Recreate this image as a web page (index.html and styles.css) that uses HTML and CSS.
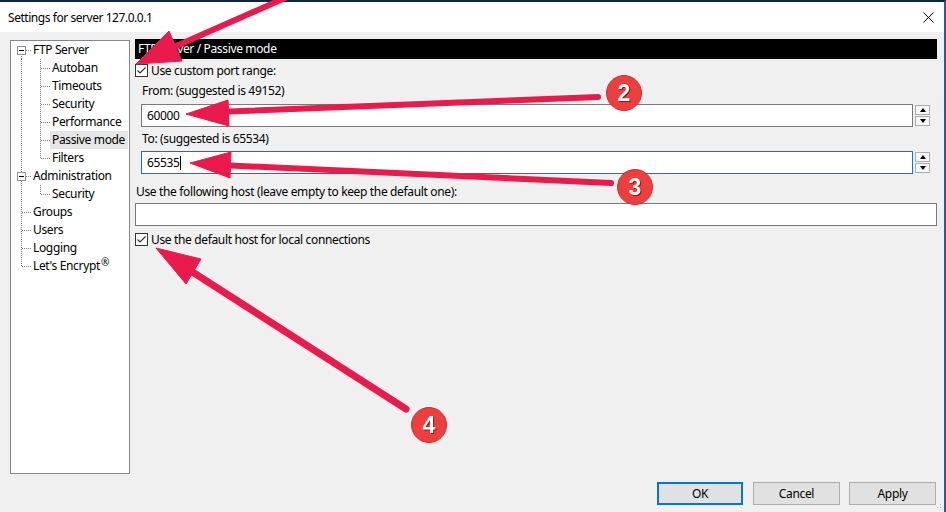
FILE: index.html
```html
<!DOCTYPE html>
<html>
<head>
<meta charset="utf-8">
<link rel="stylesheet" href="styles.css">
</head>
<body>
<div class="window">
  <div class="titlebar">
    <span class="title">Settings for server 127.0.0.1</span>
    <svg class="close" width="11" height="11" viewBox="0 0 11 11"><path d="M0.5 0.5 L10.5 10.5 M10.5 0.5 L0.5 10.5" stroke="#000" stroke-width="1"/></svg>
  </div>
  <div class="body">
    <div class="content">
      <div class="tree">
        <div class="row root first"><span class="vr-bottom"></span><span class="exp"></span><span class="hr-root"></span><span class="txt">FTP Server</span></div>
        <div class="row child"><span class="vr-full"></span><span class="vc-full"></span><span class="hr-child"></span><span class="txt">Autoban</span></div>
        <div class="row child"><span class="vr-full"></span><span class="vc-full"></span><span class="hr-child"></span><span class="txt">Timeouts</span></div>
        <div class="row child"><span class="vr-full"></span><span class="vc-full"></span><span class="hr-child"></span><span class="txt">Security</span></div>
        <div class="row child"><span class="vr-full"></span><span class="vc-full"></span><span class="hr-child"></span><span class="txt">Performance</span></div>
        <div class="row child"><span class="vr-full"></span><span class="vc-full"></span><span class="hr-child"></span><span class="txt selected">Passive mode</span></div>
        <div class="row child"><span class="vr-full"></span><span class="vc-top"></span><span class="hr-child"></span><span class="txt">Filters</span></div>
        <div class="row root"><span class="vr-full"></span><span class="exp"></span><span class="hr-root"></span><span class="txt">Administration</span></div>
        <div class="row child"><span class="vr-full"></span><span class="vc-top"></span><span class="hr-child"></span><span class="txt">Security</span></div>
        <div class="row root"><span class="vr-full"></span><span class="hr-root"></span><span class="txt">Groups</span></div>
        <div class="row root"><span class="vr-full"></span><span class="hr-root"></span><span class="txt">Users</span></div>
        <div class="row root"><span class="vr-full"></span><span class="hr-root"></span><span class="txt">Logging</span></div>
        <div class="row root"><span class="vr-top"></span><span class="hr-root"></span><span class="txt">Let's Encrypt<sup>®</sup></span></div>
      </div>
      <div class="panel">
        <div class="header">FTP Server / Passive mode</div>
        <label class="check-row first-check">
          <span class="checkbox"><svg width="11" height="11" viewBox="0 0 11 11"><path d="M1.5 5.5 L4 8 L9.5 2.5" fill="none" stroke="#333" stroke-width="1.2"/></svg></span>
          <span>Use custom port range:</span>
        </label>
        <div class="label indent lbl-from">From: (suggested is 49152)</div>
        <div class="spin-row sr-from">
          <div class="input">60000</div>
          <div class="spinner">
            <div class="spin-btn"><span class="tri-up"></span></div>
            <div class="spin-btn"><span class="tri-down"></span></div>
          </div>
        </div>
        <div class="label indent lbl-to">To: (suggested is 65534)</div>
        <div class="spin-row sr-to">
          <div class="input focused">65535<span class="caret"></span></div>
          <div class="spinner">
            <div class="spin-btn"><span class="tri-up"></span></div>
            <div class="spin-btn"><span class="tri-down"></span></div>
          </div>
        </div>
        <div class="label lbl-host">Use the following host (leave empty to keep the default one):</div>
        <div class="input wide"></div>
        <label class="check-row second-check">
          <span class="checkbox"><svg width="11" height="11" viewBox="0 0 11 11"><path d="M1.5 5.5 L4 8 L9.5 2.5" fill="none" stroke="#333" stroke-width="1.2"/></svg></span>
          <span>Use the default host for local connections</span>
        </label>
      </div>
    </div>
    <div class="footer">
      <div class="btn ok">OK</div>
      <div class="btn cancel">Cancel</div>
      <div class="btn apply">Apply</div>
    </div>
  </div>
  <div class="grip"></div>
  <svg class="annotations" width="946" height="512" viewBox="0 0 946 512">
    <g fill="#ea1a4c" stroke="#ea1a4c">
      <line x1="294" y1="-6" x2="165" y2="51" stroke-width="6" stroke-linecap="round"/>
      <polygon points="136,64 182,61 169,31" stroke-width="1" stroke-linejoin="round"/>
      <line x1="598" y1="97" x2="215" y2="112" stroke-width="6" stroke-linecap="round"/>
      <polygon points="186,114 229,126 228,100" stroke-width="1" stroke-linejoin="round"/>
      <line x1="611" y1="183" x2="220" y2="165" stroke-width="6" stroke-linecap="round"/>
      <polygon points="190,163 231,152 230,178" stroke-width="1" stroke-linejoin="round"/>
      <line x1="406" y1="409" x2="180" y2="264" stroke-width="7" stroke-linecap="round"/>
      <polygon points="156,248 201,259 186,284" stroke-width="1" stroke-linejoin="round"/>
    </g>
    <g class="badge">
      <circle cx="624" cy="93" r="17.5" fill="#ef3e3e" stroke="#c9302f" stroke-width="1"/>
      <text x="624" y="101" text-anchor="middle">2</text>
    </g>
    <g class="badge">
      <circle cx="635" cy="187" r="17.5" fill="#ef3e3e" stroke="#c9302f" stroke-width="1"/>
      <text x="635" y="195" text-anchor="middle">3</text>
    </g>
    <g class="badge">
      <circle cx="429" cy="425" r="17.5" fill="#ef3e3e" stroke="#c9302f" stroke-width="1"/>
      <text x="429" y="433" text-anchor="middle">4</text>
    </g>
  </svg>
</div>
</body>
</html>
```

FILE: styles.css
```css
* { box-sizing: border-box; }
html, body { margin: 0; padding: 0; }
body {
  width: 946px;
  height: 512px;
  overflow: hidden;
  font-family: "Noto Sans", "Open Sans", sans-serif;
  font-size: 12px;
  letter-spacing: -0.35px;
  color: #000;
  background: #f0f0f0;
}
.window {
  position: relative;
  width: 946px;
  height: 512px;
  border-top: 2px solid #0e2444;
  border-right: 2px solid #1b5eab;
  display: flex;
  flex-direction: column;
}
.titlebar {
  height: 30px;
  background: #fff;
  display: flex;
  align-items: center;
  justify-content: space-between;
  padding: 0 10px 0 8px;
}
.title { font-size: 12px; letter-spacing: -0.45px; }
.close { display: block; }
.body {
  flex: 1;
  background: #f0f0f0;
  display: flex;
  flex-direction: column;
  padding: 8px 7px 0 10px;
}
.content {
  display: flex;
  gap: 5px;
}
.tree {
  width: 120px;
  height: 434px;
  border: 1px solid #828790;
  background: #fff;
}
.row {
  position: relative;
  height: 18px;
  display: flex;
  align-items: center;
}
.row.root { padding-left: 20px; }
.row.child { padding-left: 39px; }
.txt {
  padding: 0 2px;
  line-height: 18px;
  white-space: nowrap;
}
.txt sup { font-size: 10px; vertical-align: 4px; line-height: 0; margin-left: 1px; }
.txt.selected { background: #e5e5e5; padding-right: 3px; }
.vr-full, .vr-top, .vr-bottom, .vc-full, .vc-top {
  position: absolute;
  width: 1px;
  background-image: linear-gradient(to bottom, #808080 50%, transparent 50%);
  background-size: 1px 2px;
}
.vr-full { left: 10px; top: 0; bottom: 0; }
.vr-top { left: 10px; top: 0; height: 9px; }
.vr-bottom { left: 10px; top: 9px; bottom: 0; }
.vc-full { left: 29px; top: 0; bottom: 0; }
.vc-top { left: 29px; top: 0; height: 9px; }
.hr-root, .hr-child {
  position: absolute;
  top: 9px;
  height: 1px;
  background-image: linear-gradient(to right, #808080 50%, transparent 50%);
  background-size: 2px 1px;
}
.hr-root { left: 11px; width: 9px; }
.hr-child { left: 30px; width: 9px; }
.exp {
  position: absolute;
  left: 6px;
  top: 5px;
  width: 9px;
  height: 9px;
  border: 1px solid #919191;
  background: #fff;
  z-index: 1;
}
.exp::after {
  content: "";
  position: absolute;
  left: 1px;
  top: 3px;
  width: 5px;
  height: 1px;
  background: #000;
}

.panel {
  flex: 1;
  margin-top: -1px;
  display: flex;
  flex-direction: column;
}
.header {
  height: 20px;
  line-height: 20px;
  background: #000;
  color: #fff;
  padding-left: 3px;
}
.check-row {
  display: flex;
  align-items: center;
  gap: 3px;
  height: 13px;
}
.first-check { margin-top: 5px; }
.second-check { margin-top: 7px; }
.checkbox {
  width: 13px;
  height: 13px;
  border: 1px solid #333;
  background: #fff;
  display: flex;
  align-items: center;
  justify-content: center;
}
.checkbox svg { display: block; }
.label { line-height: 16px; height: 16px; }
.indent { padding-left: 7px; }
.lbl-from { margin-top: 6px; }
.lbl-to { margin-top: 4px; }
.lbl-host { margin-top: 10px; padding-left: 1px; }
.spin-row {
  display: flex;
  gap: 2px;
  padding: 0 7px 0 6px;
}
.sr-from { margin-top: 5px; }
.sr-to { margin-top: 4px; }
.input {
  height: 23px;
  border: 1px solid #7a7a7a;
  background: #fff;
  padding-left: 5px;
  line-height: 21px;
  flex: 1;
}
.input.focused { border-color: #0078d7; }
.caret {
  display: inline-block;
  width: 1px;
  height: 14px;
  background: #000;
  vertical-align: -3px;
}
.input.wide { margin-top: 3px; flex: none; }
.spinner {
  width: 15px;
  display: flex;
  flex-direction: column;
  gap: 1px;
  padding: 1px 0;
}
.spin-btn {
  height: 10px;
  border: 1px solid #acacac;
  background: #f7f7f7;
  display: flex;
  align-items: center;
  justify-content: center;
}
.tri-up, .tri-down {
  width: 0;
  height: 0;
  border-left: 3.5px solid transparent;
  border-right: 3.5px solid transparent;
}
.tri-up { border-bottom: 4px solid #000; }
.tri-down { border-top: 4px solid #000; }

.footer {
  display: flex;
  justify-content: flex-end;
  margin-top: 8px;
  padding-right: 1px;
}
.btn {
  height: 23px;
  width: 87px;
  border: 1px solid #adadad;
  background: #e1e1e1;
  display: flex;
  align-items: center;
  justify-content: center;
}
.btn.ok { width: 86px; border: 2px solid #0078d7; }
.btn.cancel { margin-left: 10px; }
.btn.apply { margin-left: 9px; }
.grip {
  position: absolute;
  right: 1px;
  bottom: 2px;
  width: 10px;
  height: 10px;
  background-image: radial-gradient(circle, #b8b8b8 0.8px, transparent 1px);
  background-size: 3px 3px;
  clip-path: polygon(100% 0, 100% 100%, 0 100%);
}
.annotations {
  position: absolute;
  left: 0;
  top: -2px;
  pointer-events: none;
  overflow: visible;
}
.badge text {
  font-family: "Liberation Sans", sans-serif;
  font-weight: bold;
  font-size: 23px;
  letter-spacing: 0;
  fill: #fff;
  filter: drop-shadow(1px 1px 0 rgba(110, 0, 0, 0.7));
}
```
